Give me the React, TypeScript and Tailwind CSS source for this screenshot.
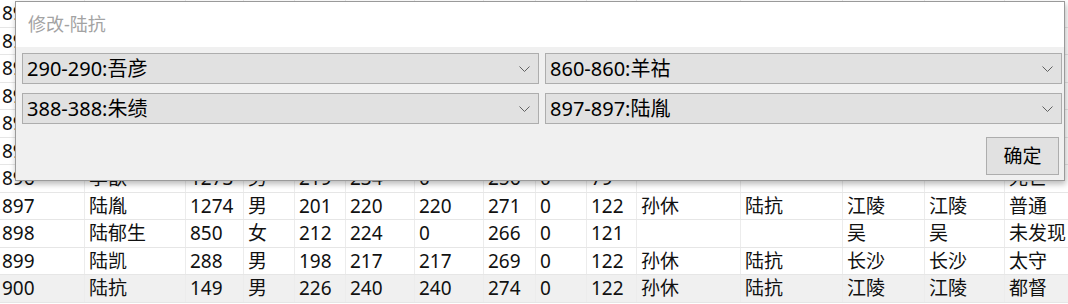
const FONT = "font-['Noto_Sans','Noto_Sans_CJK_SC',sans-serif]";

type Row = string[];

// rows 890-895 sit behind the dialog; only their id column peeks out on the left
const rows: Row[] = [
  ['890', '', '', '', '', '', '', '', '', '', '', '', '', '', ''],
  ['891', '', '', '', '', '', '', '', '', '', '', '', '', '', ''],
  ['892', '', '', '', '', '', '', '', '', '', '', '', '', '', ''],
  ['893', '', '', '', '', '', '', '', '', '', '', '', '', '', ''],
  ['894', '', '', '', '', '', '', '', '', '', '', '', '', '', ''],
  ['895', '', '', '', '', '', '', '', '', '', '', '', '', '', ''],
  ['896', '李歆', '1273', '男', '219', '234', '0', '256', '0', '79', '', '', '', '', '死亡'],
  ['897', '陆胤', '1274', '男', '201', '220', '220', '271', '0', '122', '孙休', '陆抗', '江陵', '江陵', '普通'],
  ['898', '陆郁生', '850', '女', '212', '224', '0', '266', '0', '121', '', '', '吴', '吴', '未发现'],
  ['899', '陆凯', '288', '男', '198', '217', '217', '269', '0', '122', '孙休', '陆抗', '长沙', '长沙', '太守'],
  ['900', '陆抗', '149', '男', '226', '240', '240', '274', '0', '122', '孙休', '陆抗', '江陵', '江陵', '都督'],
];

function Chevron() {
  return (
    <svg width="11" height="6" viewBox="0 0 11 6" className="shrink-0">
      <polyline points="0.5,0.5 5.5,5.5 10.5,0.5" fill="none" stroke="#606060" strokeWidth="1" />
    </svg>
  );
}

function Combo({ value }: { value: string }) {
  return (
    <div className="flex h-[31px] items-center justify-between border border-[#adadad] bg-[#e1e1e1] pl-[4px] pr-[8px]">
      <span className="text-[20px] leading-none text-[#000]">{value}</span>
      <Chevron />
    </div>
  );
}

export default function App() {
  return (
    <div className={`relative h-[304px] w-[1068px] overflow-hidden bg-white ${FONT}`}>
      <div>
        {rows.map((r) => (
          <div
            key={r[0]}
            className={`grid h-[27.5px] grid-cols-[85px_101px_58px_51px_51px_69px_69px_52px_51px_50px_104px_102px_82px_80px_63px] border-b border-[#e6e6e6] ${
              r[0] === '900' ? 'bg-[#f0f0f0]' : 'bg-white'
            }`}
          >
            {r.map((c, i) => (
              <div
                key={i}
                className={`flex items-center overflow-hidden whitespace-nowrap text-[19px] text-[#111] ${
                  i === 0 ? 'pl-[2px]' : 'pl-[4px]'
                } ${i < r.length - 1 ? 'border-r border-[#ececec]' : ''}`}
              >
                {c}
              </div>
            ))}
          </div>
        ))}
      </div>

      <div className="absolute left-[15px] top-[1px] flex h-[180px] w-[1050px] flex-col border border-[#9a9a9a] bg-[#f0f0f0] shadow-[1px_3px_6px_rgba(0,0,0,0.28)]">
        <div className="flex h-[45px] items-center bg-white pl-[12px]">
          <span className="text-[18px] text-[#a3a3a3]">修改-陆抗</span>
        </div>
        <div className="flex flex-1 flex-col pl-[6px] pr-[2px] pt-[6px]">
          <div className="grid grid-cols-2 gap-x-[6px] gap-y-[9px]">
            <Combo value="290-290:吾彦" />
            <Combo value="860-860:羊祜" />
            <Combo value="388-388:朱绩" />
            <Combo value="897-897:陆胤" />
          </div>
          <div className="mt-[13px] flex justify-end pr-[3px]">
            <button className="flex h-[38px] w-[73px] items-center justify-center border border-[#adadad] bg-[#e1e1e1] text-[19px] text-[#000]">
              确定
            </button>
          </div>
        </div>
      </div>
    </div>
  );
}
